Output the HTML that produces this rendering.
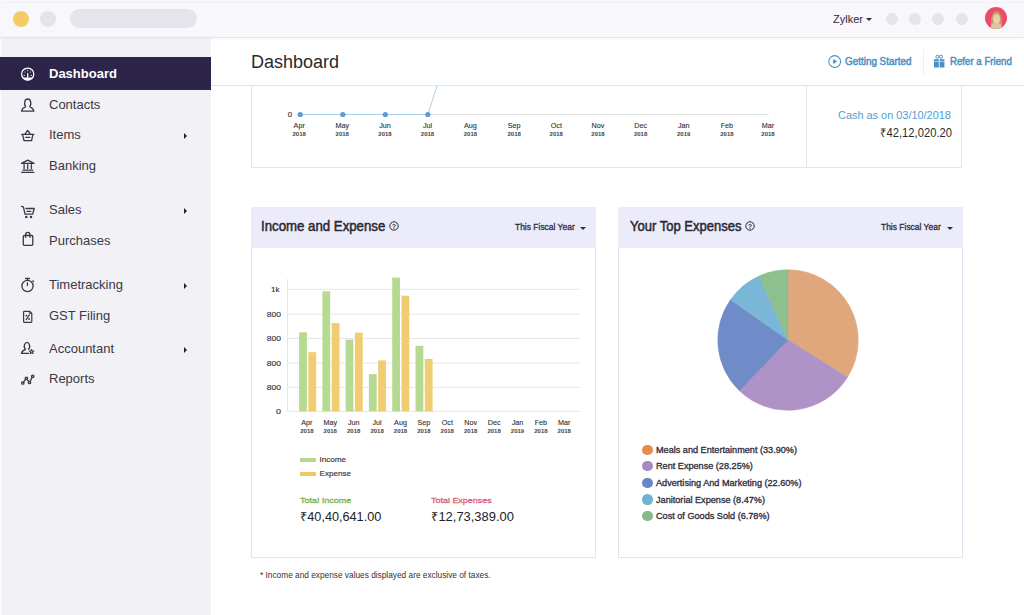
<!DOCTYPE html>
<html><head><meta charset="utf-8">
<style>
*{margin:0;padding:0;box-sizing:border-box}
html,body{width:1024px;height:615px;overflow:hidden;background:#fff;font-family:"Liberation Sans",sans-serif;color:#222}
.a{position:absolute}
.t{position:absolute;white-space:nowrap;line-height:1}
.sx{display:inline-block;transform-origin:0 0}
#top{left:0;top:0;width:1024px;height:38px;background:#f8f7fb;border-bottom:1px solid #e6e4ea;z-index:2;box-shadow:0 1px 2px rgba(0,0,0,0.03)}
#side{left:0;top:38px;width:211px;height:577px;background:#f2f1f6}
.nav{position:absolute;left:49px;font-size:13px;color:#3a3846;white-space:nowrap;line-height:16px}
.arr{position:absolute;left:184px;width:0;height:0;border-top:3px solid transparent;border-bottom:3px solid transparent;border-left:3.6px solid #22202c}
.ic{position:absolute;left:16px;width:24px;height:24px;overflow:visible}
.ic *{fill:none;stroke:#3a3846;stroke-width:1.3;stroke-linecap:round;stroke-linejoin:round}
</style></head><body>
<div id="top" class="a">
  <div class="a" style="left:3px;top:2px;width:1021px;height:1px;background:#efeef3"></div>
  <div class="a" style="left:13px;top:10.5px;width:16px;height:16px;border-radius:50%;background:#f3cc68"></div>
  <div class="a" style="left:39.5px;top:10.5px;width:16px;height:16px;border-radius:50%;background:#e3e4ec"></div>
  <div class="a" style="left:70px;top:9px;width:127px;height:19px;border-radius:10px;background:#e3e4ec"></div>
  <div class="t" style="left:833px;top:13.5px;font-size:11px;color:#2e2b3a">Zylker</div>
  <div class="a" style="left:866px;top:18px;border-left:3px solid transparent;border-right:3px solid transparent;border-top:3px solid #2e2b3a"></div>
  <div class="a" style="left:886px;top:13px;width:12px;height:12px;border-radius:50%;background:#e3e4ec"></div>
  <div class="a" style="left:909px;top:13px;width:12px;height:12px;border-radius:50%;background:#e3e4ec"></div>
  <div class="a" style="left:932px;top:13px;width:12px;height:12px;border-radius:50%;background:#e3e4ec"></div>
  <div class="a" style="left:956px;top:13px;width:12px;height:12px;border-radius:50%;background:#e3e4ec"></div>
  <div class="a" style="left:984.5px;top:7px;width:22px;height:22px;border-radius:50%;background:#ef4a68;overflow:hidden">
    <div class="a" style="left:6px;top:3.5px;width:11px;height:22px;border-radius:50% 50% 20% 20%;background:#c59a6a"></div>
    <div class="a" style="left:8px;top:6.5px;width:7.5px;height:10px;border-radius:50%;background:#ecccb0"></div>
    <div class="a" style="left:6.5px;top:16px;width:10px;height:8px;border-radius:40% 40% 0 0;background:#dcc3a3"></div>
  </div>
</div>

<div id="side" class="a">
  <div class="a" style="left:0;top:0;width:1.5px;height:577px;background:#f9f9fb"></div><div class="a" style="left:1.5px;top:0;width:1.5px;height:577px;background:#efeff3"></div>
  <div class="a" style="left:0;top:19px;width:211px;height:33px;background:#2d2549"></div>
</div>
<div class="nav" style="top:66.1px;color:#fff;font-weight:bold">Dashboard</div>
<div class="nav" style="top:97.1px">Contacts</div>
<div class="nav" style="top:127.3px">Items</div>
<div class="nav" style="top:158.1px">Banking</div>
<div class="nav" style="top:202.3px">Sales</div>
<div class="nav" style="top:232.6px">Purchases</div>
<div class="nav" style="top:277.3px">Timetracking</div>
<div class="nav" style="top:308.3px">GST Filing</div>
<div class="nav" style="top:341.1px">Accountant</div>
<div class="nav" style="top:371.3px">Reports</div>
<div class="arr" style="top:132.8px"></div>
<div class="arr" style="top:207.8px"></div>
<div class="arr" style="top:282.8px"></div>
<div class="arr" style="top:346.8px"></div>

<!-- sidebar icons -->
<svg class="ic" style="top:62px" viewBox="0 0 24 24">
  <circle cx="11.7" cy="12.1" r="6.1" style="stroke:#fff;stroke-width:1.25"/>
  <path d="M6.3 15.4 L11 15.4 L11.7 14.9 L12.4 15.4 L17.1 15.4 Q15.6 18.2 11.7 18.2 Q7.8 18.2 6.3 15.4Z" style="fill:#fff;stroke:none"/>
  <rect x="11.05" y="11.2" width="1.3" height="3.8" style="fill:#fff;stroke:none"/>
  <circle cx="11.7" cy="8.6" r="0.6" style="fill:#fff;stroke:none"/>
  <circle cx="9.1" cy="10" r="0.6" style="fill:#fff;stroke:none"/>
  <circle cx="14.3" cy="10" r="0.6" style="fill:#fff;stroke:none"/>
  <circle cx="8.2" cy="13.4" r="0.6" style="fill:#fff;stroke:none"/>
  <circle cx="15.3" cy="13.4" r="0.6" style="fill:#fff;stroke:none"/>
</svg>
<svg class="ic" style="top:93px" viewBox="0 0 24 24">
  <path d="M9.6 13.2 C8.4 12.2 8.5 9.8 8.9 8.4 C9.4 6.6 10.6 6 11.7 6 C12.8 6 14 6.6 14.5 8.4 C14.9 9.8 15 12.2 13.8 13.2 L14 14 C16.4 14.8 17.6 15.6 17.8 18.2 L5.6 18.2 C5.8 15.6 7 14.8 9.4 14 Z"/>
</svg>
<svg class="ic" style="top:123px" viewBox="0 0 24 24">
  <path d="M5.6 11.3 L17.9 11.3 M8.8 11.3 L11.7 7.4 L14.6 11.3 M6.6 11.3 L8 17.7 L15.6 17.7 L16.9 11.3 M9.8 14.4 L13.8 14.4"/>
</svg>
<svg class="ic" style="top:154px" viewBox="0 0 24 24">
  <path d="M5.5 9.4 L11.7 6.2 L18 9.4 Z M8.1 10.6 L8.1 14.6 M11.7 10.6 L11.7 14.6 M15.4 10.6 L15.4 14.6 M7 16.2 L16.6 16.2 M5.6 18.3 L17.9 18.3"/>
</svg>
<svg class="ic" style="top:198px" viewBox="0 0 24 24">
  <path d="M5.5 8.3 L7.4 8.8 L9 16.2 L16.7 16.2 L18.2 10.5 L10 10.5 M11 13.4 L14.8 13.4"/>
  <circle cx="10.3" cy="19.1" r="0.6" style="fill:#3a3846"/>
  <circle cx="15" cy="19.1" r="0.6" style="fill:#3a3846"/>
</svg>
<svg class="ic" style="top:228px" viewBox="0 0 24 24">
  <rect x="7.3" y="7.5" width="9.5" height="9.8" rx="1"/>
  <path d="M9.6 9.3 L9.6 7 Q9.6 4.3 11.8 4.3 Q14 4.3 14 7 L14 9.3"/>
</svg>
<svg class="ic" style="top:273px" viewBox="0 0 24 24">
  <circle cx="11.5" cy="13" r="5.6"/>
  <path d="M9.6 5.5 L13.4 5.5 M11.5 5.6 L11.5 7.3 M16.8 7.9 L17.6 8.6 M11.4 10 L11.4 12.6"/>
</svg>
<svg class="ic" style="top:304px" viewBox="0 0 24 24">
  <path d="M8.4 7.3 L13.8 7.3 L15.8 9.3 L15.8 17.6 Q15.8 18.4 15 18.4 L8.4 18.4 Q7.6 18.4 7.6 17.6 L7.6 8.1 Q7.6 7.3 8.4 7.3 Z" style="stroke-width:1.2"/>
  <path d="M13.6 7.5 L15.6 9.5 L13.6 9.5 Z" style="fill:#3a3846;stroke-width:0.6"/>
  <path d="M10.2 15.6 L13.3 10.8" style="stroke-width:1.2"/>
  <circle cx="10.4" cy="11.6" r="0.9" style="fill:#3a3846;stroke:none"/>
  <circle cx="13.1" cy="15" r="0.9" style="fill:#3a3846;stroke:none"/>
</svg>
<svg class="ic" style="top:337px" viewBox="0 0 24 24">
  <path d="M12.6 12.3 C13.8 11 13.8 8.6 13.3 7.4 C12.8 6 11.9 5.3 11 5.3 C10 5.3 9.1 6 8.6 7.4 C8.1 8.8 8.4 11.2 9.4 12.2 L9.3 12.6 C7.2 13.4 5.6 14.4 5.5 16.4 L12.5 16.4"/>
  <path d="M15.6 12.6 L16.3 13.9 L17.7 14.1 L16.7 15.1 L16.9 16.5 L15.6 15.8 L14.3 16.5 L14.5 15.1 L13.5 14.1 L14.9 13.9 Z" style="stroke-width:1.1"/>
</svg>
<svg class="ic" style="top:367px" viewBox="0 0 24 24">
  <path d="M7.4 15.4 L9.6 12.2 M11 12 L12.7 14.6 M14.2 14.6 L16 10.2" style="stroke-width:1.3"/>
  <circle cx="6.8" cy="16" r="1.2"/>
  <circle cx="10.4" cy="11.3" r="1.2"/>
  <circle cx="13.5" cy="15.5" r="1.2"/>
  <circle cx="16.7" cy="9.3" r="1.2"/>
</svg>

<div class="a" style="left:211px;top:38px;width:813px;height:577px;background:#fff"></div>
<!-- top chart panel -->
<div class="a" style="left:251px;top:60px;width:711px;height:108px;border:1px solid #e4e2f0;border-top:none"></div>
<div class="a" style="left:805.5px;top:85px;width:1px;height:82px;background:#e4e2f0"></div>
<div class="t" id="cash" style="left:838.2px;top:109px;font-size:11.7px;color:#4ea0d2"><span class="sx" style="transform:scaleX(0.934)">Cash as on 03/10/2018</span></div>
<div class="t" id="cashv" style="left:880px;top:126.5px;font-size:12px;color:#2a2a2a"><span class="sx" style="transform:scaleX(0.934)">&#8377;42,12,020.20</span></div>

<!-- header -->
<div class="a" style="left:211px;top:38px;width:813px;height:48px;background:#fff;border-bottom:1px solid #e4e2f0"></div>
<div class="t" style="left:251px;top:52.8px;font-size:18px;color:#2a2a2a">Dashboard</div>
<svg class="a" style="left:827px;top:53.5px" width="15" height="15" viewBox="0 0 15 15"><circle cx="7.7" cy="7.5" r="5.9" fill="none" stroke="#4d90c4" stroke-width="1.1"/><path d="M6.2 4.9 L10.2 7.5 L6.2 10.1 Z" fill="#4d90c4"/></svg>
<div class="t" id="gs" style="left:845px;top:56px;font-size:10.7px;font-weight:normal;-webkit-text-stroke:0.5px #4d90c4;color:#4d90c4"><span class="sx" style="transform:scaleX(0.925)">Getting Started</span></div>
<div class="a" style="left:923px;top:48.5px;width:1px;height:26px;background:#ededf2"></div>
<svg class="a" style="left:933px;top:54px" width="12" height="14" viewBox="0 0 12 14"><rect x="1" y="5.2" width="10.4" height="1.8" fill="#4d90c4"/><rect x="1" y="7.5" width="10.4" height="6" fill="#4d90c4"/><rect x="5.8" y="5" width="0.8" height="9" fill="#fff"/><circle cx="4.4" cy="2.7" r="1.5" fill="none" stroke="#4d90c4" stroke-width="1"/><circle cx="8" cy="2.7" r="1.5" fill="none" stroke="#4d90c4" stroke-width="1"/></svg>
<div class="t" id="rf" style="left:949.5px;top:56px;font-size:10.7px;font-weight:normal;-webkit-text-stroke:0.5px #4d90c4;color:#4d90c4"><span class="sx" style="transform:scaleX(0.905)">Refer a Friend</span></div>

<!-- panels -->
<div class="a" style="left:251px;top:207px;width:345px;height:351px;border:1px solid #e4e2f0"></div>
<div class="a" style="left:251px;top:207px;width:345px;height:41px;background:#ecebfa"></div>
<div class="t" id="ie" style="left:261px;top:219.2px;font-size:14px;font-weight:normal;-webkit-text-stroke:0.5px #2a2a33;color:#2a2a33"><span class="sx" style="transform:scaleX(0.945)">Income and Expense</span></div>
<svg class="a" style="left:389px;top:221px" width="10" height="10" viewBox="0 0 10 10"><circle cx="5" cy="5" r="4.2" fill="none" stroke="#2a2a33" stroke-width="1"/><text x="5" y="7.5" font-size="6.5" font-weight="bold" text-anchor="middle" fill="#333" font-family="Liberation Sans">?</text></svg>
<div class="t" id="fy1" style="left:514.5px;top:223px;font-size:9px;font-weight:normal;-webkit-text-stroke:0.30px #2e2b3a;color:#2e2b3a"><span class="sx" style="transform:scaleX(0.94)">This Fiscal Year</span></div>
<div class="a" style="left:580px;top:227px;border-left:3px solid transparent;border-right:3px solid transparent;border-top:3px solid #2e2b3a"></div>

<div class="a" style="left:618px;top:207px;width:345px;height:351px;border:1px solid #e4e2f0"></div>
<div class="a" style="left:618px;top:207px;width:345px;height:41px;background:#ecebfa"></div>
<div class="t" id="te" style="left:629.5px;top:219.2px;font-size:14px;font-weight:normal;-webkit-text-stroke:0.5px #2a2a33;color:#2a2a33"><span class="sx" style="transform:scaleX(0.93)">Your Top Expenses</span></div>
<svg class="a" style="left:744.5px;top:221px" width="10" height="10" viewBox="0 0 10 10"><circle cx="5" cy="5" r="4.2" fill="none" stroke="#2a2a33" stroke-width="1"/><text x="5" y="7.5" font-size="6.5" font-weight="bold" text-anchor="middle" fill="#333" font-family="Liberation Sans">?</text></svg>
<div class="t" id="fy2" style="left:880.5px;top:223px;font-size:9px;font-weight:normal;-webkit-text-stroke:0.30px #2e2b3a;color:#2e2b3a"><span class="sx" style="transform:scaleX(0.94)">This Fiscal Year</span></div>
<div class="a" style="left:946.5px;top:227px;border-left:3px solid transparent;border-right:3px solid transparent;border-top:3px solid #2e2b3a"></div>

<!-- bar legend & totals -->
<div class="a" style="left:299.5px;top:458px;width:16px;height:4px;background:#b3d98e"></div>
<div class="t" id="l1" style="left:319.5px;top:456px;font-size:8.1px;color:#333;-webkit-text-stroke:0.15px #333"><span class="sx">Income</span></div>
<div class="a" style="left:299.5px;top:471.5px;width:16px;height:4px;background:#eec765"></div>
<div class="t" id="l2" style="left:319.5px;top:469.5px;font-size:8.1px;color:#333;-webkit-text-stroke:0.15px #333"><span class="sx">Expense</span></div>
<div class="t" id="ti" style="left:300px;top:497px;font-size:8.1px;font-weight:normal;-webkit-text-stroke:0.30px #74b352;color:#74b352"><span class="sx" style="transform:scaleX(1.12)">Total Income</span></div>
<div class="t" id="tiv" style="left:299.5px;top:511px;font-size:12.2px;color:#222"><span class="sx" style="transform:scaleX(1.04)">&#8377;40,40,641.00</span></div>
<div class="t" id="tx" style="left:431px;top:497px;font-size:8.1px;font-weight:normal;-webkit-text-stroke:0.30px #d9607a;color:#d9607a"><span class="sx" style="transform:scaleX(1.105)">Total Expenses</span></div>
<div class="t" id="txv" style="left:431px;top:511px;font-size:12.2px;color:#222"><span class="sx" style="transform:scaleX(1.06)">&#8377;12,73,389.00</span></div>

<!-- pie legend -->
<div class="a" style="left:642.3px;top:444.8px;width:10.4px;height:10.4px;border-radius:50%;background:#e58c4f"></div>
<div class="a" style="left:642.3px;top:461px;width:10.4px;height:10.4px;border-radius:50%;background:#a68ac4"></div>
<div class="a" style="left:642.3px;top:477.6px;width:10.4px;height:10.4px;border-radius:50%;background:#6a86c6"></div>
<div class="a" style="left:642.3px;top:494.2px;width:10.4px;height:10.4px;border-radius:50%;background:#6fb3d4"></div>
<div class="a" style="left:642.3px;top:510.5px;width:10.4px;height:10.4px;border-radius:50%;background:#84b98a"></div>
<div class="t" id="p1" style="left:656.4px;top:446px;font-size:8.7px;font-weight:normal;-webkit-text-stroke:0.30px #2e2b3a;color:#2e2b3a"><span class="sx" style="transform:scaleX(1.05)">Meals and Entertainment (33.90%)</span></div>
<div class="t" id="p2" style="left:656.4px;top:462.3px;font-size:8.7px;font-weight:normal;-webkit-text-stroke:0.30px #2e2b3a;color:#2e2b3a"><span class="sx" style="transform:scaleX(1.05)">Rent Expense (28.25%)</span></div>
<div class="t" id="p3" style="left:656.4px;top:478.9px;font-size:8.7px;font-weight:normal;-webkit-text-stroke:0.30px #2e2b3a;color:#2e2b3a"><span class="sx" style="transform:scaleX(1.05)">Advertising And Marketing (22.60%)</span></div>
<div class="t" id="p4" style="left:656.4px;top:495.5px;font-size:8.7px;font-weight:normal;-webkit-text-stroke:0.30px #2e2b3a;color:#2e2b3a"><span class="sx" style="transform:scaleX(1.05)">Janitorial Expense (8.47%)</span></div>
<div class="t" id="p5" style="left:656.4px;top:511.8px;font-size:8.7px;font-weight:normal;-webkit-text-stroke:0.30px #2e2b3a;color:#2e2b3a"><span class="sx" style="transform:scaleX(1.05)">Cost of Goods Sold (6.78%)</span></div>

<div class="t" id="fn" style="left:259.5px;top:570.8px;font-size:8.7px;color:#333"><span class="sx" style="transform:scaleX(0.955)">* Income and expense values displayed are exclusive of taxes.</span></div>
<svg class="a" style="left:0;top:0" width="1024" height="615" font-family="Liberation Sans, sans-serif">
<line x1="300.2" y1="114.5" x2="769" y2="114.5" stroke="#e3e3e3" stroke-width="1"/>
<polyline points="300.2,114.5 427.84999999999997,114.5 437,86" fill="none" stroke="#a6cfee" stroke-width="1"/>
<circle cx="300.2" cy="114.5" r="2.6" fill="#5b9bd1"/>
<circle cx="342.8" cy="114.5" r="2.6" fill="#5b9bd1"/>
<circle cx="385.3" cy="114.5" r="2.6" fill="#5b9bd1"/>
<circle cx="427.8" cy="114.5" r="2.6" fill="#5b9bd1"/>
<text x="292" y="117.3" font-size="7.8" fill="#333" stroke="#333" stroke-width="0.15" text-anchor="end">0</text>
<text x="299.2" y="127.7" font-size="7.2" fill="#333" stroke="#333" stroke-width="0.12" text-anchor="middle">Apr</text>
<text x="299.2" y="135.9" font-size="6" font-weight="bold" fill="#444" text-anchor="middle">2018</text>
<text x="342.3" y="127.7" font-size="7.2" fill="#333" stroke="#333" stroke-width="0.12" text-anchor="middle">May</text>
<text x="342.3" y="135.9" font-size="6" font-weight="bold" fill="#444" text-anchor="middle">2018</text>
<text x="385.0" y="127.7" font-size="7.2" fill="#333" stroke="#333" stroke-width="0.12" text-anchor="middle">Jun</text>
<text x="385.0" y="135.9" font-size="6" font-weight="bold" fill="#444" text-anchor="middle">2018</text>
<text x="427.5" y="127.7" font-size="7.2" fill="#333" stroke="#333" stroke-width="0.12" text-anchor="middle">Jul</text>
<text x="427.5" y="135.9" font-size="6" font-weight="bold" fill="#444" text-anchor="middle">2018</text>
<text x="470.4" y="127.7" font-size="7.2" fill="#333" stroke="#333" stroke-width="0.12" text-anchor="middle">Aug</text>
<text x="470.4" y="135.9" font-size="6" font-weight="bold" fill="#444" text-anchor="middle">2018</text>
<text x="514.2" y="127.7" font-size="7.2" fill="#333" stroke="#333" stroke-width="0.12" text-anchor="middle">Sep</text>
<text x="514.2" y="135.9" font-size="6" font-weight="bold" fill="#444" text-anchor="middle">2018</text>
<text x="556.3" y="127.7" font-size="7.2" fill="#333" stroke="#333" stroke-width="0.12" text-anchor="middle">Oct</text>
<text x="556.3" y="135.9" font-size="6" font-weight="bold" fill="#444" text-anchor="middle">2018</text>
<text x="598.0" y="127.7" font-size="7.2" fill="#333" stroke="#333" stroke-width="0.12" text-anchor="middle">Nov</text>
<text x="598.0" y="135.9" font-size="6" font-weight="bold" fill="#444" text-anchor="middle">2018</text>
<text x="640.6" y="127.7" font-size="7.2" fill="#333" stroke="#333" stroke-width="0.12" text-anchor="middle">Dec</text>
<text x="640.6" y="135.9" font-size="6" font-weight="bold" fill="#444" text-anchor="middle">2018</text>
<text x="683.7" y="127.7" font-size="7.2" fill="#333" stroke="#333" stroke-width="0.12" text-anchor="middle">Jan</text>
<text x="683.7" y="135.9" font-size="6" font-weight="bold" fill="#444" text-anchor="middle">2019</text>
<text x="726.9" y="127.7" font-size="7.2" fill="#333" stroke="#333" stroke-width="0.12" text-anchor="middle">Feb</text>
<text x="726.9" y="135.9" font-size="6" font-weight="bold" fill="#444" text-anchor="middle">2018</text>
<text x="768.0" y="127.7" font-size="7.2" fill="#333" stroke="#333" stroke-width="0.12" text-anchor="middle">Mar</text>
<text x="768.0" y="135.9" font-size="6" font-weight="bold" fill="#444" text-anchor="middle">2018</text>
<line x1="287.5" y1="279" x2="287.5" y2="411.5" stroke="#e6e6e6" stroke-width="1"/>
<line x1="287.5" y1="289.3" x2="580" y2="289.3" stroke="#e6e6e6" stroke-width="1"/>
<text x="271.0" y="292.0" font-size="7.8" fill="#333" stroke="#333" stroke-width="0.15" textLength="8.5" lengthAdjust="spacingAndGlyphs">1k</text>
<line x1="287.5" y1="314.2" x2="580" y2="314.2" stroke="#e6e6e6" stroke-width="1"/>
<text x="266.8" y="316.9" font-size="7.8" fill="#333" stroke="#333" stroke-width="0.15" textLength="14.2" lengthAdjust="spacingAndGlyphs">800</text>
<line x1="287.5" y1="338.5" x2="580" y2="338.5" stroke="#e6e6e6" stroke-width="1"/>
<text x="266.8" y="341.2" font-size="7.8" fill="#333" stroke="#333" stroke-width="0.15" textLength="14.2" lengthAdjust="spacingAndGlyphs">800</text>
<line x1="287.5" y1="363.0" x2="580" y2="363.0" stroke="#e6e6e6" stroke-width="1"/>
<text x="266.8" y="365.7" font-size="7.8" fill="#333" stroke="#333" stroke-width="0.15" textLength="14.2" lengthAdjust="spacingAndGlyphs">800</text>
<line x1="287.5" y1="387.4" x2="580" y2="387.4" stroke="#e6e6e6" stroke-width="1"/>
<text x="266.8" y="390.1" font-size="7.8" fill="#333" stroke="#333" stroke-width="0.15" textLength="14.2" lengthAdjust="spacingAndGlyphs">800</text>
<line x1="287.5" y1="411.4" x2="580" y2="411.4" stroke="#e6e6e6" stroke-width="1"/>
<text x="276" y="414.1" font-size="7.8" fill="#333" stroke="#333" stroke-width="0.15" textLength="5" lengthAdjust="spacingAndGlyphs">0</text>
<rect x="299.1" y="332.3" width="7.8" height="79.1" fill="#b6da91"/>
<rect x="308.4" y="352.2" width="7.8" height="59.2" fill="#f1cd72"/>
<rect x="322.4" y="291.3" width="7.8" height="120.1" fill="#b6da91"/>
<rect x="331.7" y="323.0" width="7.8" height="88.4" fill="#f1cd72"/>
<rect x="345.6" y="339.6" width="7.8" height="71.8" fill="#b6da91"/>
<rect x="354.9" y="332.6" width="7.8" height="78.8" fill="#f1cd72"/>
<rect x="368.9" y="374.2" width="7.8" height="37.2" fill="#b6da91"/>
<rect x="378.2" y="360.4" width="7.8" height="51.0" fill="#f1cd72"/>
<rect x="392.2" y="277.6" width="7.8" height="133.8" fill="#b6da91"/>
<rect x="401.5" y="295.7" width="7.8" height="115.7" fill="#f1cd72"/>
<rect x="415.5" y="345.8" width="7.8" height="65.6" fill="#b6da91"/>
<rect x="424.8" y="359.0" width="7.8" height="52.4" fill="#f1cd72"/>
<text x="306.9" y="425.2" font-size="7.2" fill="#333" stroke="#333" stroke-width="0.12" text-anchor="middle">Apr</text>
<text x="306.9" y="433" font-size="6" font-weight="bold" fill="#444" text-anchor="middle">2018</text>
<text x="330.3" y="425.2" font-size="7.2" fill="#333" stroke="#333" stroke-width="0.12" text-anchor="middle">May</text>
<text x="330.3" y="433" font-size="6" font-weight="bold" fill="#444" text-anchor="middle">2018</text>
<text x="353.7" y="425.2" font-size="7.2" fill="#333" stroke="#333" stroke-width="0.12" text-anchor="middle">Jun</text>
<text x="353.7" y="433" font-size="6" font-weight="bold" fill="#444" text-anchor="middle">2018</text>
<text x="377.1" y="425.2" font-size="7.2" fill="#333" stroke="#333" stroke-width="0.12" text-anchor="middle">Jul</text>
<text x="377.1" y="433" font-size="6" font-weight="bold" fill="#444" text-anchor="middle">2018</text>
<text x="400.5" y="425.2" font-size="7.2" fill="#333" stroke="#333" stroke-width="0.12" text-anchor="middle">Aug</text>
<text x="400.5" y="433" font-size="6" font-weight="bold" fill="#444" text-anchor="middle">2018</text>
<text x="423.9" y="425.2" font-size="7.2" fill="#333" stroke="#333" stroke-width="0.12" text-anchor="middle">Sep</text>
<text x="423.9" y="433" font-size="6" font-weight="bold" fill="#444" text-anchor="middle">2018</text>
<text x="447.3" y="425.2" font-size="7.2" fill="#333" stroke="#333" stroke-width="0.12" text-anchor="middle">Oct</text>
<text x="447.3" y="433" font-size="6" font-weight="bold" fill="#444" text-anchor="middle">2018</text>
<text x="470.7" y="425.2" font-size="7.2" fill="#333" stroke="#333" stroke-width="0.12" text-anchor="middle">Nov</text>
<text x="470.7" y="433" font-size="6" font-weight="bold" fill="#444" text-anchor="middle">2018</text>
<text x="494.1" y="425.2" font-size="7.2" fill="#333" stroke="#333" stroke-width="0.12" text-anchor="middle">Dec</text>
<text x="494.1" y="433" font-size="6" font-weight="bold" fill="#444" text-anchor="middle">2018</text>
<text x="517.5" y="425.2" font-size="7.2" fill="#333" stroke="#333" stroke-width="0.12" text-anchor="middle">Jan</text>
<text x="517.5" y="433" font-size="6" font-weight="bold" fill="#444" text-anchor="middle">2019</text>
<text x="540.9" y="425.2" font-size="7.2" fill="#333" stroke="#333" stroke-width="0.12" text-anchor="middle">Feb</text>
<text x="540.9" y="433" font-size="6" font-weight="bold" fill="#444" text-anchor="middle">2018</text>
<text x="564.3" y="425.2" font-size="7.2" fill="#333" stroke="#333" stroke-width="0.12" text-anchor="middle">Mar</text>
<text x="564.3" y="433" font-size="6" font-weight="bold" fill="#444" text-anchor="middle">2018</text>
<path d="M788,340 L788.00,269.80 A70.2,70.2 0 0 1 847.51,377.24 Z" fill="#e0a77c" stroke="#e0a77c" stroke-width="0.6"/>
<path d="M788,340 L847.51,377.24 A70.2,70.2 0 0 1 739.46,390.72 Z" fill="#b093c6" stroke="#b093c6" stroke-width="0.6"/>
<path d="M788,340 L739.46,390.72 A70.2,70.2 0 0 1 730.57,299.63 Z" fill="#6f8cc8" stroke="#6f8cc8" stroke-width="0.6"/>
<path d="M788,340 L730.57,299.63 A70.2,70.2 0 0 1 758.99,276.07 Z" fill="#7ab6d6" stroke="#7ab6d6" stroke-width="0.6"/>
<path d="M788,340 L758.99,276.07 A70.2,70.2 0 0 1 788.00,269.80 Z" fill="#8ebf8e" stroke="#8ebf8e" stroke-width="0.6"/>
</svg>
</body></html>
